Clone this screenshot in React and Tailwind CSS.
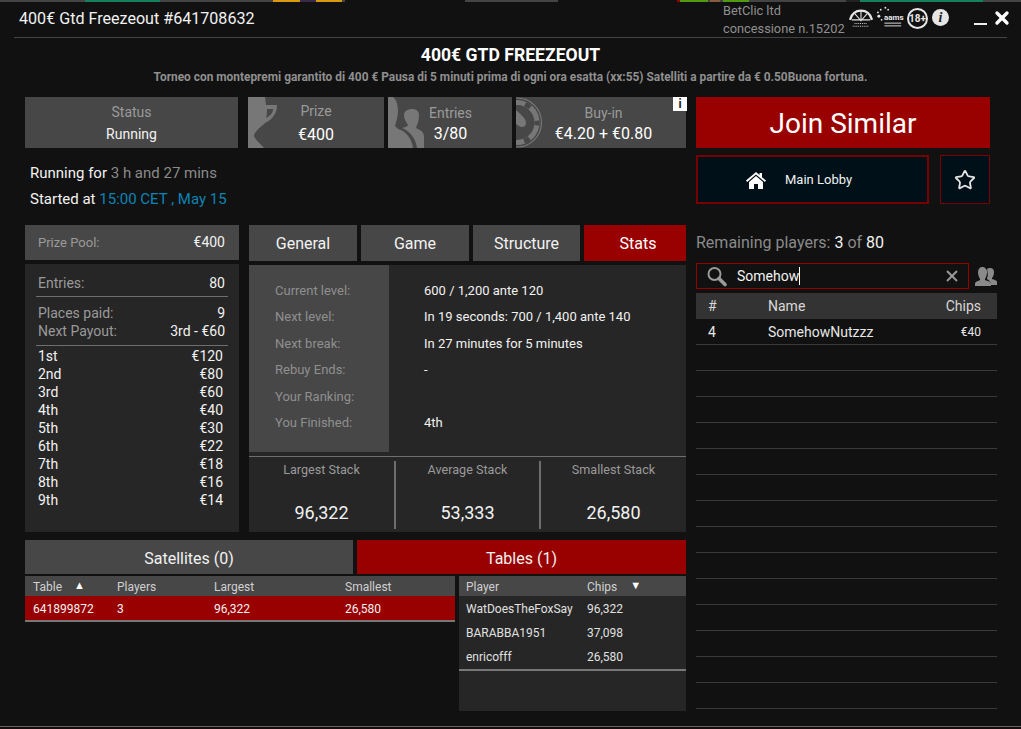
import React from "react";
import { Star, X } from "lucide-react";

const PAYOUTS = [
  ["1st", "€120"], ["2nd", "€80"], ["3rd", "€60"], ["4th", "€40"], ["5th", "€30"],
  ["6th", "€22"], ["7th", "€18"], ["8th", "€16"], ["9th", "€14"],
];

const STATS = [
  ["Current level:", "600 / 1,200 ante 120"],
  ["Next level:", "In 19 seconds: 700 / 1,400 ante 140"],
  ["Next break:", "In 27 minutes for 5 minutes"],
  ["Rebuy Ends:", "-"],
  ["Your Ranking:", ""],
  ["You Finished:", "4th"],
];

const TABLE_PLAYERS = [
  ["WatDoesTheFoxSay", "96,322"],
  ["BARABBA1951", "37,098"],
  ["enricofff", "26,580"],
];

const EMPTY_ROWS = Array.from({ length: 14 }, (_, i) => i);

function People({ className }) {
  return (
    <svg viewBox="0 0 36 51" className={className} fill="#777">
      <path d="M0 0h5c4 3 5 9 5 14 0 6-2 11-3 15l3 3c8 2 14 10 15 19H0z" />
      <path d="M16 18c0-4 4-6 8-6s7 2 7 6c0 6-2 10-3 13 4 2 8 3 8 9v11h-7c-1-9-7-17-15-20 4-1 6-2 6-3-2-3-4-6-4-10z" />
    </svg>
  );
}

function Trophy({ className }) {
  return (
    <svg viewBox="0 0 30 51" className={className} fill="#777">
      <path d="M0 0h17l1 8h11c0 8-4 14-12 18-3 3-9 7-11 12 0 4 6 8 10 13H0z" />
      <path d="M19 12h6c0 4-3 7-7 9 1-3 1-6 1-9z" fill="#474747" />
    </svg>
  );
}

function Chip({ className }) {
  return (
    <svg viewBox="0 0 27 51" className={className} fill="none">
      <circle cx="1" cy="25.5" r="24.5" stroke="#777" strokeWidth="1.2" />
      <circle cx="1" cy="25.5" r="20" stroke="#777" strokeWidth="5" />
      <circle cx="1" cy="25.5" r="20" stroke="#474747" strokeWidth="5" strokeDasharray="6 15" strokeDashoffset="3" />
      <path d="M0 13c4 4 10 8 10 13 0 4-4 5-7 3l-3-2z" fill="#777" />
    </svg>
  );
}

function PlayersIcon() {
  return (
    <svg viewBox="0 0 22 19" className="w-[22px] h-[19px]" fill="#8a8a8a">
      <path d="M15 1c3 0 4 2 4 4 0 3-1 5-2 6v1c2 1 5 1 5 3v3h-6c0-3-2-5-4-6v-1c1-2 1-3 0-9 1-1 2-1 3-1z" />
      <path d="M7 0c3 0 5 2 5 5 0 3-1 5-2 7v1c2 1 6 1 6 4v2H0v-2c0-3 4-3 5-4v-1C4 10 3 8 3 5c0-3 2-5 4-5z" />
    </svg>
  );
}

function SearchIcon() {
  return (
    <svg viewBox="0 0 21 21" className="ml-[9px] w-[21px] h-[21px]" fill="none" stroke="#9a9a9a">
      <circle cx="8.5" cy="8" r="6" strokeWidth="2" />
      <path d="M13 12.5l6 6" strokeWidth="3.6" strokeLinecap="round" />
    </svg>
  );
}

function HomeIcon() {
  return (
    <svg viewBox="0 0 20 17" className="w-[20px] h-[17px] mr-[19px]" fill="white">
      <path d="M10 0l3.5 3V1h2.5v4.2L20 8.6 18.8 10 10 2.5 1.2 10 0 8.6z" />
      <path d="M10 4l7 6v7h-5v-5H8v5H3v-7z" />
    </svg>
  );
}

function StatTile({ icon, label, value, width, labelClass, valueClass }) {
  return (
    <div className={`${width} relative bg-[#474747] flex h-[51px] overflow-hidden`}>
      {icon}
      <div className="flex-1 flex flex-col items-center">
        <span className={`text-[14px] leading-[18px] text-[#9a9a9a] ${labelClass}`}>{label}</span>
        <span className={`text-[16px] leading-[20px] text-white ${valueClass}`}>{value}</span>
      </div>
    </div>
  );
}

export default function App() {
  return (
    <div className="w-[1021px] h-[729px] overflow-hidden bg-[#111111] text-white font-['Roboto',sans-serif] flex flex-col">
      <div className="h-[2px] flex shrink-0 bg-[#444]">
        <div className="w-[85px]" />
        <div className="w-[75px] bg-[#15805a]" />
        <div className="w-[113px]" />
        <div className="w-[27px] bg-[#d89a10]" />
        <div className="w-[16px] bg-[#3a2a4a]" />
        <div className="w-[26px] bg-[#d89a10]" />
        <div className="w-[3px]" />
        <div className="w-[120px] bg-[#111]" />
        <div className="w-[93px]" />
        <div className="w-[119px] bg-[#111]" />
        <div className="w-[3px] bg-[#990000]" />
        <div className="w-[28px] bg-[#4f9a12]" />
        <div className="w-[2px]" />
        <div className="w-[10px] bg-[#8a5a40]" />
        <div className="w-[3px]" />
        <div className="w-[26px] bg-[#4f9a12]" />
        <div className="w-[97px]" />
        <div className="w-[14px] bg-[#222]" />
        <div className="w-[123px] bg-[#15805a]" />
      </div>

      {/* title bar */}
      <div className="mx-[14px] h-[36px] shrink-0 border-b border-[#444] flex items-center">
        <span className="ml-[5px] text-[16.1px] text-[#f2f2f2]">400€ Gtd Freezeout #641708632</span>
        <div className="ml-auto mr-[-5px] flex items-center">
          <div className="w-[126px] text-[12.8px] leading-[18px] text-[#8f8f8f] whitespace-nowrap">
            <div>BetClic ltd</div>
            <div>concessione n.15202</div>
          </div>
          <svg viewBox="0 0 26 24" className="w-[24px] h-[22px] mb-[3px]" fill="none" stroke="#e6e6e6">
            <path d="M1 14C3 7 8 4 13 4s10 3 12 10" strokeWidth="2.5" />
            <path d="M13 4v11M6 7l7 8 7-8M3 14h20" strokeWidth="1.2" />
            <path d="M6 18h14M4 21h18" strokeWidth="1" strokeDasharray="1 1" />
          </svg>
          <div className="ml-[4px] w-[26px] mb-[3px] relative h-[24px]">
            <svg viewBox="0 0 28 24" className="w-[26px] h-[24px]" fill="#e6e6e6">
              <circle cx="2" cy="10" r="1.6" /><circle cx="1" cy="6" r="1" /><circle cx="4" cy="3" r="1" />
              <circle cx="9" cy="1" r="1" /><circle cx="12" cy="3" r="1" /><circle cx="5" cy="14" r="1" />
              <rect x="8" y="17" width="18" height="1" /><rect x="8" y="20" width="18" height="1" />
            </svg>
            <span className="absolute left-[7px] top-[7px] text-[8px] leading-[9px] font-bold text-[#e6e6e6]">aams</span>
          </div>
          <div className="ml-[4px] mb-[3px] w-[21px] h-[21px] rounded-full border-2 border-[#e6e6e6] flex items-center justify-center text-[10px] font-bold text-[#e6e6e6]">18+</div>
          <div className="ml-[4px] mb-[5px] w-[17px] h-[17px] rounded-full bg-[#e6e6e6] flex items-center justify-center text-[14px] font-bold italic text-[#222] font-['Liberation_Serif',serif]">i</div>
          <div className="ml-[25px] w-[13px] h-[2px] bg-[#eee] mt-[9px]" />
          <X className="ml-[5px] w-[20px] h-[20px] mb-[3px] text-white" strokeWidth={4} />
        </div>
      </div>

      {/* heading */}
      <div className="text-center pt-[7px] h-[59px] shrink-0">
        <div className="text-[17.6px] leading-[20px] font-bold text-white">400€ GTD FREEZEOUT</div>
        <div className="text-[11.9px] leading-[14px] mt-[5px] font-bold text-[#8f8f8f]">
          Torneo con montepremi garantito di 400 € Pausa di 5 minuti prima di ogni ora esatta (xx:55) Satelliti a partire da € 0.50Buona fortuna.
        </div>
      </div>

      <div className="flex pl-[25px] gap-[10px]">
        {/* left part */}
        <div className="w-[661px] shrink-0">
          <div className="flex h-[51px]">
            <div className="w-[214px] bg-[#474747] flex flex-col items-center pt-[6px]">
              <span className="text-[14px] leading-[18px] text-[#9a9a9a]">Status</span>
              <span className="text-[14px] leading-[18px] mt-[4px] text-[#f2f2f2]">Running</span>
            </div>
            <div className="ml-[10px] flex gap-[4px]">
              <StatTile
                width="w-[136px]"
                icon={<Trophy className="w-[30px] h-[51px] shrink-0" />}
                label="Prize"
                value="€400"
                labelClass="mt-[5px] mr-[30px]"
                valueClass="mt-[5px] mr-[30px]"
              />
              <StatTile
                width="w-[124px]"
                icon={<People className="w-[36px] h-[51px] shrink-0" />}
                label="Entries"
                value="3/80"
                labelClass="mt-[7px] mr-[35px]"
                valueClass="mt-[2px] mr-[35px]"
              />
              <StatTile
                width="w-[170px]"
                icon={<Chip className="w-[27px] h-[51px] shrink-0" />}
                label="Buy-in"
                value="€4.20 + €0.80"
                labelClass="mt-[7px] mr-[22px]"
                valueClass="mt-[2px] mr-[22px]"
              />
            </div>
          </div>

          <div className="h-[77px] pl-[5px] pt-[12px] text-[15px] leading-[26px]">
            <div className="text-[#f2f2f2]">Running for <span className="text-[#8a8a8a]">3 h and 27 mins</span></div>
            <div className="text-[#f2f2f2]">Started at <span className="text-[#0b84b5]">15:00 CET , May 15</span></div>
          </div>

          <div className="flex gap-[10px]">
            {/* prize pool */}
            <div className="w-[214px] shrink-0">
              <div className="h-[35px] bg-[#474747] flex items-center justify-between pl-[13px] pr-[14px] text-[13px]">
                <span className="text-[#9a9a9a]">Prize Pool:</span>
                <span className="text-[14px] text-[#f2f2f2]">€400</span>
              </div>
              <div className="mt-[4px] h-[268px] bg-[#262626] px-[11px] text-[14px] leading-[18px]">
                <div className="h-[33px] border-b border-[#6e6e6e] flex justify-between pt-[11px] pl-[2px] pr-0">
                  <span className="text-[#9a9a9a] leading-[16px]">Entries:</span>
                  <span className="text-[#f2f2f2] pr-[3px] leading-[16px]">80</span>
                </div>
                <div className="h-[49px] border-b border-[#6e6e6e] pt-[7px] pl-[2px] pr-[3px]">
                  <div className="flex justify-between"><span className="text-[#9a9a9a]">Places paid:</span><span className="text-[#f2f2f2]">9</span></div>
                  <div className="flex justify-between"><span className="text-[#9a9a9a]">Next Payout:</span><span className="text-[#f2f2f2]">3rd - €60</span></div>
                </div>
                <div className="pt-[1px] pl-[2px] pr-[5px] text-[#f2f2f2]">
                  {PAYOUTS.map(([place, amount]) => (
                    <div key={place} className="flex justify-between"><span>{place}</span><span>{amount}</span></div>
                  ))}
                </div>
              </div>
            </div>

            {/* tabs and stats */}
            <div className="w-[437px] shrink-0">
              <div className="flex gap-[4px] h-[36px] text-[16px] text-[#f2f2f2]">
                <div className="w-[108px] bg-[#474747] flex items-center justify-center pt-[2px]">General</div>
                <div className="w-[108px] bg-[#474747] flex items-center justify-center pt-[2px]">Game</div>
                <div className="w-[107px] bg-[#474747] flex items-center justify-center pt-[2px]">Structure</div>
                <div className="w-[102px] bg-[#990000] flex items-center justify-center pt-[2px] pl-[6px] text-white">Stats</div>
              </div>
              <div className="mt-[4px] h-[267px] bg-[#262626] flex flex-col">
                <div className="h-[187px] flex">
                  <div className="w-[140px] bg-[#474747] pt-[13px] pl-[26px] text-[13px] leading-[26.4px] text-[#8f8f8f]">
                    {STATS.map(([label]) => <div key={label}>{label}</div>)}
                  </div>
                  <div className="pt-[13px] pl-[35px] text-[13px] leading-[26.4px] text-[#f2f2f2]">
                    {STATS.map(([label, value]) => <div key={label} className="h-[26.4px]">{value}</div>)}
                  </div>
                </div>
                <div className="mt-[4px] flex-1 border-t border-[#6e6e6e] flex pt-[4px] pb-[3px]">
                  {[["Largest Stack", "96,322", "w-[147px]"], ["Average Stack", "53,333", "w-[145px]"], ["Smallest Stack", "26,580", "flex-1"]].map(([label, value, width], i) => (
                    <div key={label} className={`${width} flex flex-col items-center ${i < 2 ? "border-r-2 border-[#6e6e6e]" : ""}`}>
                      <span className="text-[12.6px] leading-[16px] mt-[1px] text-[#9a9a9a]">{label}</span>
                      <span className="text-[18px] leading-[22px] mt-[24px] text-[#f2f2f2]">{value}</span>
                    </div>
                  ))}
                </div>
              </div>
            </div>
          </div>

          {/* satellites and tables */}
          <div className="mt-[8px] flex gap-[4px] h-[34px] text-[16px] text-[#f2f2f2]">
            <div className="w-[328px] bg-[#474747] flex items-center justify-center pt-[3px]">Satellites (0)</div>
            <div className="flex-1 bg-[#990000] flex items-center justify-center pt-[3px]">Tables (1)</div>
          </div>
          <div className="mt-[2px] flex gap-[4px] text-[12px]">
            <div className="w-[430px] shrink-0">
              <div className="h-[20px] pt-[2px] bg-[#474747] flex items-center text-[#d0d0d0]">
                <span className="w-[84px] pl-[8px] flex items-center">Table<span className="ml-[12px] mb-[2px] text-[11px] text-white">▲</span></span>
                <span className="w-[97px] pl-[8px]">Players</span>
                <span className="w-[131px] pl-[8px]">Largest</span>
                <span className="pl-[8px]">Smallest</span>
              </div>
              <div className="h-[26px] pt-[2px] bg-[#990000] border-b-2 border-[#777] flex items-center text-[#f2f2f2]">
                <span className="w-[84px] pl-[8px]">641899872</span>
                <span className="w-[97px] pl-[8px]">3</span>
                <span className="w-[131px] pl-[8px]">96,322</span>
                <span className="pl-[8px]">26,580</span>
              </div>
            </div>
            <div className="flex-1 h-[135px] bg-[#262626]">
              <div className="h-[20px] pt-[2px] bg-[#474747] flex items-center text-[#d0d0d0]">
                <span className="w-[128px] pl-[7px]">Player</span>
                <span>Chips</span>
                <span className="ml-[13px] mb-[2px] text-[11px] text-white">▼</span>
              </div>
              <div className="border-b-2 border-[#777] pb-[1px]">
                {TABLE_PLAYERS.map(([name, chips]) => (
                  <div key={name} className="h-[24px] pt-[2px] flex items-center text-[#e0e0e0]">
                    <span className="w-[128px] pl-[7px] whitespace-nowrap">{name}</span>
                    <span>{chips}</span>
                  </div>
                ))}
              </div>
            </div>
          </div>
        </div>

        {/* right part */}
        <div className="w-[301px] shrink-0">
          <div className="relative w-[294px] h-[51px] pt-[2px] bg-[#990000] flex items-center justify-center text-[28px] text-white">
            <span className="absolute left-[-23px] top-0 w-[14px] h-[14px] bg-white text-[#222] text-[12px] leading-[14px] font-bold text-center">i</span>
            Join Similar
          </div>
          <div className="mt-[7px] flex w-[294px] justify-between">
            <div className="w-[233px] h-[49px] pt-[1px] bg-[#001018] border-2 border-[#7a0000] flex items-center pl-[48px] text-[13px] text-[#f2f2f2]">
              <HomeIcon />
              Main Lobby
            </div>
            <div className="w-[50px] h-[49px] bg-[#001018] border border-[#7a0000] flex items-center justify-center">
              <Star className="w-[22px] h-[22px] text-[#e6e6e6]" strokeWidth={2} />
            </div>
          </div>
          <div className="mt-[29px] h-[20px] text-[16px] leading-[20px] text-[#8a8a8a]">
            Remaining players: <span className="text-[#f2f2f2]">3</span> of <span className="text-[#f2f2f2]">80</span>
          </div>
          <div className="mt-[10px] flex items-center">
            <div className="w-[274px] h-[26px] border border-[#990000] flex items-center bg-[#111]">
              <SearchIcon />
              <span className="ml-[10px] text-[14px] text-[#f2f2f2] border-r border-white leading-[18px]">Somehow</span>
              <X className="ml-auto mr-[7px] w-[18px] h-[18px] text-[#999]" strokeWidth={2.5} />
            </div>
            <div className="ml-[6px]"><PlayersIcon /></div>
          </div>
          <div className="mt-[4px] h-[26px] bg-[#333333] flex items-center text-[14px] text-[#d8d8d8]">
            <span className="w-[72px] pl-[12px]">#</span>
            <span>Name</span>
            <span className="ml-auto pr-[16px]">Chips</span>
          </div>
          <div className="h-[26px] pt-[1px] border-b border-[#3a3a3a] flex items-center text-[14px] text-[#e6e6e6]">
            <span className="w-[72px] pl-[12px]">4</span>
            <span>SomehowNutzzz</span>
            <span className="ml-auto pr-[16px] text-[12px]">€40</span>
          </div>
          {EMPTY_ROWS.map((i) => (
            <div key={i} className="h-[26px] border-b border-[#3a3a3a]" />
          ))}
        </div>
      </div>

      <div className="mt-auto h-[3px] shrink-0 border-t border-[#666] bg-[#160c0c]" />
    </div>
  );
}
